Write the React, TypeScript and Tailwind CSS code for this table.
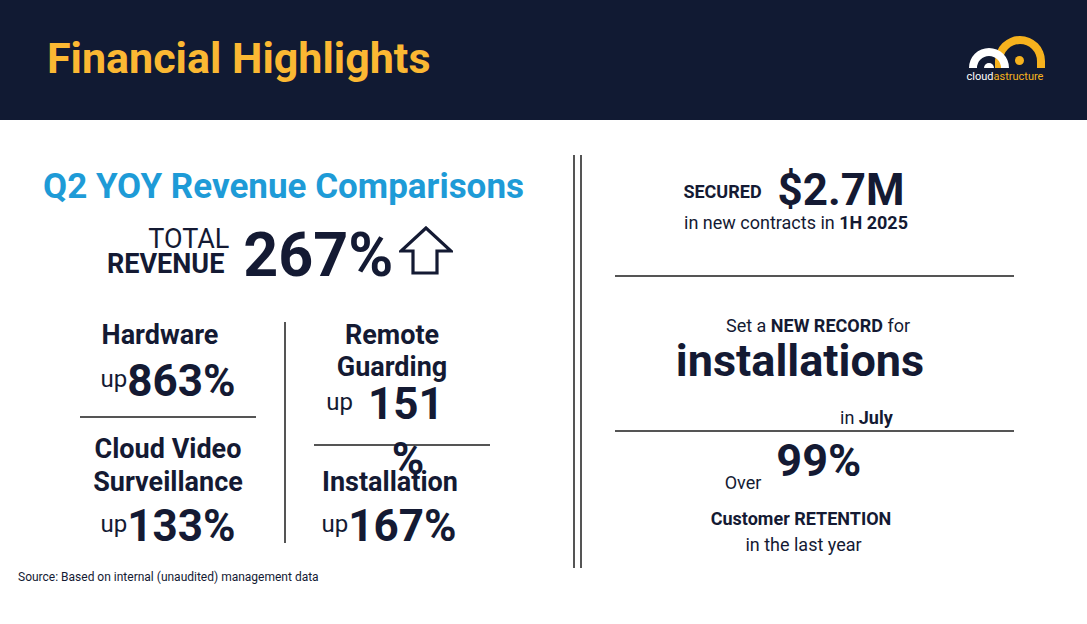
import React from 'react';

const Logo = () => (
  <div className="flex flex-col items-center mt-[30px]">
    <svg width="90" height="40" viewBox="0 0 90 40">
      <path
        d="M35 38 L35 31 A25 25 0 0 1 85 31 L85 38 L77 38 L77 31 A17 17 0 0 0 43 31 L43 38 Z"
        fill="#f6b21e"
      />
      <circle cx="59.5" cy="30.5" r="4.5" fill="#f6b21e" />
      <path d="M9 38 A20 20 0 0 1 49 38 L41 38 A12 12 0 0 0 17 38 Z" fill="#ffffff" />
      <path d="M24 38 A5 5 0 0 1 34 38 Z" fill="#ffffff" />
    </svg>
    <div className="mt-[1px] text-[11px] leading-none">
      <span className="text-white">cloud</span>
      <span className="text-[#f6b21e]">astructure</span>
    </div>
  </div>
);

const UpArrow = () => (
  <svg width="54" height="50" viewBox="0 0 54 50" className="mt-[1px] ml-[6px]">
    <path
      d="M27 2 L2 25 L14 25 L14 47 L38 47 L38 25 L52 25 Z"
      fill="none"
      stroke="#141a33"
      strokeWidth="3.2"
      strokeLinejoin="miter"
    />
  </svg>
);

const Up = ({ value, spaced }: { value: string; spaced?: boolean }) => (
  <div className="flex items-start justify-center">
    <span className={`text-[24px] leading-none mt-[8px] ${spaced ? 'mr-[15px]' : ''}`}>up</span>
    <span className="text-[44px] leading-none font-bold">{value}</span>
  </div>
);

export default function App() {
  return (
    <div className="w-[1087px] h-[624px] overflow-hidden bg-white text-[#141a33] font-[family-name:Roboto,sans-serif]">
      {/* header */}
      <div className="h-[120px] bg-[#111a33] flex justify-between items-start pl-[47px] pr-[37px]">
        <h1 className="mt-[37px] text-[43px] leading-none font-bold text-[#fbb833]">Financial Highlights</h1>
        <Logo />
      </div>

      <div className="flex h-[504px]">
        {/* left: revenue comparisons */}
        <div className="w-[573px] flex flex-col pt-[49px]">
          <h2 className="pl-[43px] text-[35px] leading-none font-bold text-[#1e9bd7]">Q2 YOY Revenue Comparisons</h2>

          <div className="flex items-start pl-[107px] mt-[21px]">
            <div className="flex flex-col items-end mt-[2px] text-[27px] leading-[25px]">
              <span className="mr-[-5px]">TOTAL</span>
              <span className="font-bold">REVENUE</span>
            </div>
            <span className="ml-[19px] text-[61px] leading-none font-bold">267%</span>
            <UpArrow />
          </div>

          <div className="flex ml-[80px] mt-[33px]">
            <div className="w-[176px] flex flex-col text-center">
              <div className="mt-[3px] pr-[16px] text-[27px] leading-none font-bold">Hardware</div>
              <div className="mt-[10px]">
                <Up value="863%" />
              </div>
              <div className="mt-[13px] h-[2px] bg-[#555]" />
              <div className="mt-[15px] text-[27px] leading-[33px] font-bold">
                Cloud Video
                <br />
                Surveillance
              </div>
              <div className="mt-[5px]">
                <Up value="133%" />
              </div>
            </div>

            <div className="mx-[28px] mt-[3px] w-[2px] h-[221px] bg-[#555]" />

            <div className="w-[176px] flex flex-col text-center">
              <div className="pr-[20px] text-[27px] leading-[32px] font-bold">
                Remote
                <br />
                Guarding
              </div>
              <div className="pr-[34px] mt-[-1px]">
                <Up value="151" spaced />
              </div>
              <div className="mt-[18px] h-[2px] bg-[#555]" />
              <div className="pl-[12px] mt-[-9px] text-[44px] leading-none font-bold">%</div>
              <div className="pr-[24px] mt-[-12px] text-[27px] leading-none font-bold">Installation</div>
              <div className="pr-[26px] mt-[8px]">
                <Up value="167%" />
              </div>
            </div>
          </div>

          <p className="ml-[18px] mt-[23px] text-[12px] leading-none">
            Source: Based on internal (unaudited) management data
          </p>
        </div>

        {/* double divider */}
        <div className="mt-[35px] w-[9px] h-[413px] border-x-2 border-[#555]" />

        {/* right: highlights */}
        <div className="pt-[48px] pl-[33px]">
          <div className="w-[399px] flex flex-col">
            <div className="flex items-start justify-center pr-[41px]">
              <span className="mt-[15px] mr-[16px] text-[18px] leading-none font-bold">SECURED</span>
              <span className="text-[44px] leading-none font-bold">$2.7M</span>
            </div>
            <p className="mt-[2px] pr-[37px] text-center text-[18px] leading-none">
              in new contracts in <b>1H 2025</b>
            </p>

            <div className="mt-[43px] h-[2px] bg-[#555]" />

            <p className="mt-[40px] pl-[7px] text-center text-[18px] leading-none">
              Set a <b>NEW RECORD</b> for
            </p>
            <p className="mt-[3px] pr-[29px] text-center text-[45px] leading-none font-bold">installations</p>
            <p className="mt-[26px] pl-[225px] text-[18px] leading-none">
              in <b>July</b>
            </p>

            <div className="mt-[3px] h-[2px] bg-[#555]" />

            <div className="mt-[6px] flex items-start justify-center pr-[43px]">
              <span className="mt-[36px] mr-[15px] text-[18px] leading-none">Over</span>
              <span className="text-[45px] leading-none font-bold">99%</span>
            </div>
            <p className="mt-[18px] pr-[27px] text-center text-[18px] leading-none font-bold">Customer RETENTION</p>
            <p className="mt-[8px] pr-[22px] text-center text-[18px] leading-none">in the last year</p>
          </div>
        </div>
      </div>
    </div>
  );
}
